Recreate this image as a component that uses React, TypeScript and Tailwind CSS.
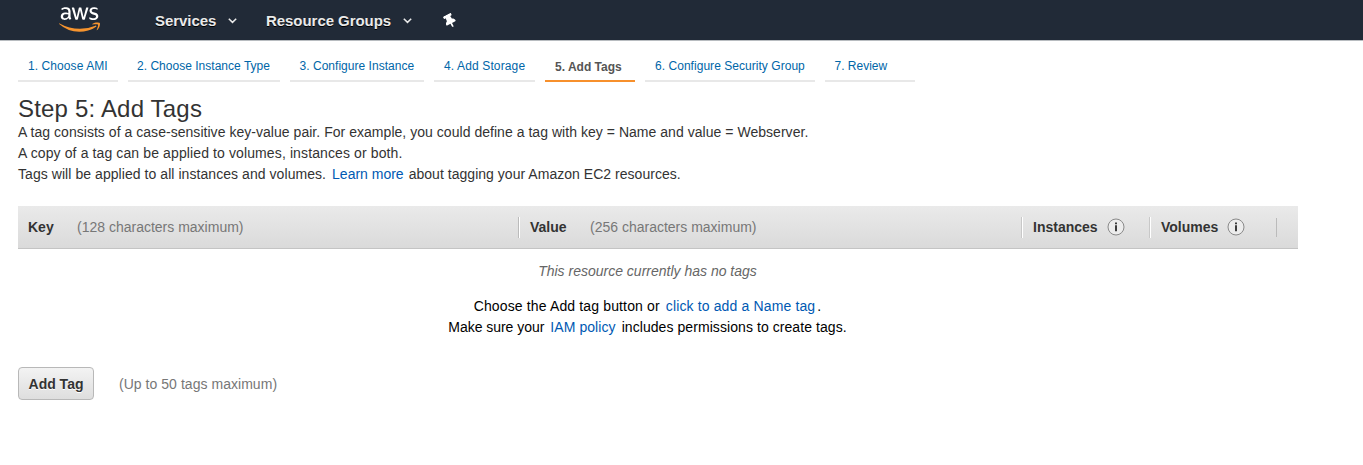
import { FaAws, FaThumbtack } from "react-icons/fa";
import type { ReactNode } from "react";

function Chevron() {
  return (
    <svg width="9" height="6" viewBox="0 0 9 6" fill="none" stroke="#eaeaea" strokeWidth="1.5">
      <path d="M0.8 0.8 4.5 4.4 8.2 0.8" />
    </svg>
  );
}

function Info() {
  return (
    <svg width="18" height="18" viewBox="0 0 18 18">
      <circle cx="9" cy="9" r="8" fill="#ececec" stroke="#8a8a8a" strokeWidth="1" />
      <path d="M8 4.4h2v1.8H8zM8 7.2h2v6H8z" fill="#3c3c3c" />
    </svg>
  );
}

function Link({ children }: { children: ReactNode }) {
  return <a className="text-[#0059b3]">{children}</a>;
}

const steps = [
  { label: "1. Choose AMI", width: "w-[100px]", spacing: "tracking-[0.08px] pl-[10px]" },
  { label: "2. Choose Instance Type", width: "w-[152px]", spacing: "tracking-[0.02px] pl-[9px]" },
  { label: "3. Configure Instance", width: "w-[134px]", spacing: "tracking-[0.03px] pl-[9.5px]" },
  { label: "4. Add Storage", width: "w-[101px]", spacing: "tracking-[0.13px] pl-[10px]" },
  { label: "5. Add Tags", width: "w-[90px]", spacing: "pl-[10px]", active: true },
  { label: "6. Configure Security Group", width: "w-[170px]", spacing: "tracking-[0.04px] pl-[10px]" },
  { label: "7. Review", width: "w-[90px]", spacing: "pl-[9.5px]" },
];

export default function App() {
  return (
    <div className="h-[465px] w-[1363px] overflow-hidden whitespace-nowrap bg-white font-['Liberation_Sans',Arial,sans-serif] text-sm leading-[21px] text-[#333]">
      <header className="flex h-[41px] items-center border-b border-[#b8bcc0] bg-[#212a37] pl-[59px] text-[15px] font-bold text-[#eaeaea] [text-shadow:0_1px_0_#000]">
        <svg width="0" height="0" className="absolute">
          <linearGradient id="logo" gradientUnits="userSpaceOnUse" x1="0" y1="0" x2="0" y2="512">
            <stop offset="0.58" stopColor="#fff" />
            <stop offset="0.58" stopColor="#f7942e" />
          </linearGradient>
        </svg>
        <FaAws className="-mt-px h-[33px] w-[41px]" style={{ fill: "url(#logo)" }} />
        <span className="ml-[55px] w-[61px] tracking-[-0.05px]">Services</span>
        <span className="ml-3 mt-0.5"><Chevron /></span>
        <span className="ml-[29px] w-[125px] tracking-[-0.05px]">Resource Groups</span>
        <span className="ml-3 mt-0.5"><Chevron /></span>
        <FaThumbtack className="ml-[31px] mt-0.5 h-[14px] w-[14px] -rotate-[28deg] text-white" />
      </header>
      <nav className="ml-[18px] mt-[11px] flex gap-[10px] text-xs leading-[21px]">
        {steps.map((s) => (
          <div
            key={s.label}
            className={`h-[30px] shrink-0 border-b-2 ${s.width} ${s.spacing} ${
              s.active ? "border-[#f7902c] pt-[5px] font-bold text-[#555]" : "border-[#e8e8e8] pt-1 text-[#0066a8]"
            }`}
          >
            {s.label}
          </div>
        ))}
      </nav>
      <main className="ml-[18px] w-[1280px]">
        <h1 className="mt-[13px] h-[27px] text-2xl leading-[27px] tracking-[0.19px]">Step 5: Add Tags</h1>
        <p className="tracking-[0.037px]">A tag consists of a case-sensitive key-value pair. For example, you could define a tag with key = Name and value = Webserver.</p>
        <p className="tracking-[0.115px]">A copy of a tag can be applied to volumes, instances or both.</p>
        <p className="flex gap-1.5">
          <span className="tracking-[0.06px]">Tags will be applied to all instances and volumes.</span>
          <Link>Learn more</Link>
          <span className="-ml-px tracking-[0.03px]">about tagging your Amazon EC2 resources.</span>
        </p>
        <div className="mt-[21px] flex h-[43px] items-center border-b border-[#c4c4c4] bg-linear-to-b from-[#eaeaea] to-[#dadada]">
          <div className="flex w-[500px] pl-[10px]"><b className="w-[49px]">Key</b><span className="text-[#777]">(128 characters maximum)</span></div>
          <div className="flex w-[503px] border-l border-[#bbb] pl-[11px] shadow-[inset_1px_0_0_#fff]"><b className="w-[60px]">Value</b><span className="text-[#777]">(256 characters maximum)</span></div>
          <div className="flex w-[128px] items-center border-l border-[#c8c8c8] pl-[11px] shadow-[inset_1px_0_0_#fff]"><b className="w-[73.5px]">Instances</b><Info /></div>
          <div className="flex w-[127px] items-center border-l border-[#c8c8c8] pl-[11px] shadow-[inset_1px_0_0_#fff]"><b className="w-[65.5px]">Volumes</b><Info /></div>
          <div className="h-[19px] w-px bg-[#bbb]" />
        </div>
        <div className="mt-3 w-[1259px] text-center text-black">
          <p className="italic text-[#666]">This resource currently has no tags</p>
          <p className="mt-[14px] flex justify-center tracking-[0.14px]">
            <span className="mr-1.5">Choose the Add tag button or</span>
            <Link>click to add a Name tag</Link>
            <span className="ml-0.5">.</span>
          </p>
          <p className="flex justify-center gap-1.5 tracking-[0.07px]">
            <span className="tracking-[-0.03px]">Make sure your</span>
            <Link>IAM policy</Link>
            <span>includes permissions to create tags.</span>
          </p>
        </div>
        <div className="mt-[29px] flex items-center">
          <button className="h-[33px] w-[76px] rounded-[4px] border border-[#b8b8b8] bg-linear-to-b from-[#f3f3f3] to-[#dedede] pt-0.5 font-bold [text-shadow:0_1px_0_#fff]">Add Tag</button>
          <span className="ml-[25px] pt-0.5 tracking-[0.04px] text-[#777]">(Up to 50 tags maximum)</span>
        </div>
      </main>
    </div>
  );
}
